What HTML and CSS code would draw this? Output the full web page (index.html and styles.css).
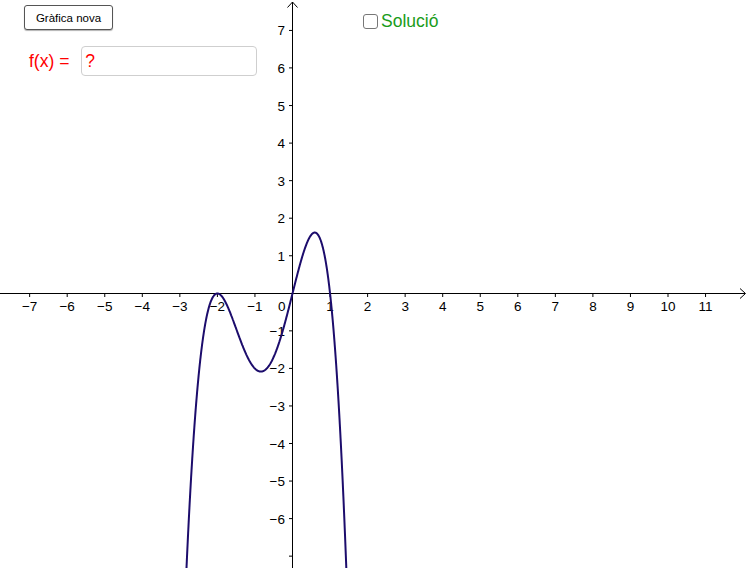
FILE: index.html
```html
<!DOCTYPE html>
<html>
<head>
<meta charset="utf-8">
<link rel="stylesheet" href="styles.css">
</head>
<body>
<div class="app">
  <svg class="graph" width="747" height="568" viewBox="0 0 747 568" xmlns="http://www.w3.org/2000/svg">
    <g class="axes">
      <line x1="0" y1="293.5" x2="745" y2="293.5"/>
      <polyline points="740,288.5 745.5,293.5 740,298.5" fill="none"/>
      <line x1="292.5" y1="2" x2="292.5" y2="568"/>
      <polyline points="287.5,7.5 292.5,2 297.5,7.5" fill="none"/>
      <g class="ticks">
        <line x1="29.65" y1="293.5" x2="29.65" y2="297"/>
        <line x1="67.2" y1="293.5" x2="67.2" y2="297"/>
        <line x1="104.75" y1="293.5" x2="104.75" y2="297"/>
        <line x1="142.3" y1="293.5" x2="142.3" y2="297"/>
        <line x1="179.85" y1="293.5" x2="179.85" y2="297"/>
        <line x1="217.4" y1="293.5" x2="217.4" y2="297"/>
        <line x1="254.95" y1="293.5" x2="254.95" y2="297"/>
        <line x1="330.05" y1="293.5" x2="330.05" y2="297"/>
        <line x1="367.6" y1="293.5" x2="367.6" y2="297"/>
        <line x1="405.15" y1="293.5" x2="405.15" y2="297"/>
        <line x1="442.7" y1="293.5" x2="442.7" y2="297"/>
        <line x1="480.25" y1="293.5" x2="480.25" y2="297"/>
        <line x1="517.8" y1="293.5" x2="517.8" y2="297"/>
        <line x1="555.35" y1="293.5" x2="555.35" y2="297"/>
        <line x1="592.9" y1="293.5" x2="592.9" y2="297"/>
        <line x1="630.45" y1="293.5" x2="630.45" y2="297"/>
        <line x1="668" y1="293.5" x2="668" y2="297"/>
        <line x1="705.55" y1="293.5" x2="705.55" y2="297"/>
        <line x1="289" y1="30.45" x2="292.5" y2="30.45"/>
        <line x1="289" y1="67.9" x2="292.5" y2="67.9"/>
        <line x1="289" y1="105.55" x2="292.5" y2="105.55"/>
        <line x1="289" y1="143.1" x2="292.5" y2="143.1"/>
        <line x1="289" y1="180.65" x2="292.5" y2="180.65"/>
        <line x1="289" y1="218.2" x2="292.5" y2="218.2"/>
        <line x1="289" y1="255.75" x2="292.5" y2="255.75"/>
        <line x1="289" y1="330.85" x2="292.5" y2="330.85"/>
        <line x1="289" y1="368.4" x2="292.5" y2="368.4"/>
        <line x1="289" y1="405.95" x2="292.5" y2="405.95"/>
        <line x1="289" y1="443.5" x2="292.5" y2="443.5"/>
        <line x1="289" y1="481.05" x2="292.5" y2="481.05"/>
        <line x1="289" y1="518.6" x2="292.5" y2="518.6"/>
        <line x1="289" y1="556.15" x2="292.5" y2="556.15"/>
      </g>
    </g>
    <g class="xlabels">
      <text x="29.65" y="311.3">−7</text>
      <text x="67.2" y="311.3">−6</text>
      <text x="104.75" y="311.3">−5</text>
      <text x="142.3" y="311.3">−4</text>
      <text x="179.85" y="311.3">−3</text>
      <text x="217.4" y="311.3">−2</text>
      <text x="254.95" y="311.3">−1</text>
      <text x="330.05" y="311.3">1</text>
      <text x="367.6" y="311.3">2</text>
      <text x="405.15" y="311.3">3</text>
      <text x="442.7" y="311.3">4</text>
      <text x="480.25" y="311.3">5</text>
      <text x="517.8" y="311.3">6</text>
      <text x="555.35" y="311.3">7</text>
      <text x="592.9" y="311.3">8</text>
      <text x="630.45" y="311.3">9</text>
      <text x="668" y="311.3">10</text>
      <text x="705.55" y="311.3">11</text>
    </g>
    <g class="ylabels">
      <text x="285.5" y="311.3">0</text>
      <text x="285" y="35.4">7</text>
      <text x="285" y="72.9">6</text>
      <text x="285" y="110.5">5</text>
      <text x="285" y="148.1">4</text>
      <text x="285" y="185.6">3</text>
      <text x="285" y="223.2">2</text>
      <text x="285" y="260.7">1</text>
      <text x="285" y="335.8">−1</text>
      <text x="285" y="373.4">−2</text>
      <text x="285" y="410.9">−3</text>
      <text x="285" y="448.5">−4</text>
      <text x="285" y="486">−5</text>
      <text x="285" y="523.6">−6</text>
    </g>
    <path id="curve" class="curve" d=""/>
  </svg>

  <button class="btn-new">Gràfica nova</button>

  <div class="fx-row">
    <span class="fx-label">f(x) =</span>
    <div class="fx-input">?</div>
  </div>

  <label class="solution">
    <span class="check"></span>
    <span class="solution-text">Solució</span>
  </label>
</div>
<script src="script.js"></script>
</body>
</html>
```

FILE: styles.css
```css
html, body {
  margin: 0;
  padding: 0;
  background: #ffffff;
}

.app {
  position: relative;
  width: 747px;
  height: 568px;
  overflow: hidden;
  font-family: "Liberation Sans", Arial, sans-serif;
}

.graph {
  position: absolute;
  left: 0;
  top: 0;
  display: block;
}

.axes line,
.axes polyline {
  stroke: #000000;
  stroke-width: 1;
}

.xlabels text,
.ylabels text {
  font-family: "Liberation Sans", Arial, sans-serif;
  font-size: 13.5px;
  fill: #000000;
}

.xlabels text {
  text-anchor: middle;
}

.ylabels text {
  text-anchor: end;
}

.curve {
  fill: none;
  stroke: #1c0c6c;
  stroke-width: 2;
  stroke-linejoin: round;
}

.btn-new {
  position: absolute;
  left: 24px;
  top: 5px;
  width: 89px;
  height: 25px;
  margin: 0;
  padding: 0;
  background: #ffffff;
  border: 1.5px solid #555555;
  border-radius: 3px;
  box-shadow: 0 1px 1px rgba(0, 0, 0, 0.3);
  font-family: "Liberation Sans", Arial, sans-serif;
  font-size: 11.5px;
  color: #000000;
}

.fx-row {
  position: absolute;
  left: 29px;
  top: 46px;
  display: flex;
  align-items: center;
  gap: 12px;
}

.fx-label {
  font-size: 17.5px;
  color: #ff0000;
  line-height: 30px;
}

.fx-input {
  box-sizing: border-box;
  width: 176px;
  height: 30px;
  border: 1px solid #cfcfcf;
  border-radius: 4px;
  padding-left: 3px;
  font-size: 17.5px;
  line-height: 28px;
  color: #ff0000;
}

.solution {
  position: absolute;
  left: 363px;
  top: 9px;
  display: flex;
  align-items: center;
  gap: 3px;
}

.check {
  box-sizing: border-box;
  width: 15px;
  height: 15px;
  border: 1.5px solid #777777;
  border-radius: 3px;
  background: #ffffff;
}

.solution-text {
  font-size: 17.5px;
  line-height: 24px;
  color: #1a9c1a;
}
```

FILE: script.js
```js
(function () {
  var ox = 292.5, oy = 293.5, u = 37.55;
  function f(x) { return -x * (x - 1) * (x + 2) * (x + 2); }
  var pts = [];
  for (var x = -2.95; x <= 1.6; x += 0.005) {
    var y = f(x);
    var px = ox + x * u;
    var py = oy - y * u;
    if (py > 620) continue;
    pts.push(px.toFixed(2) + "," + py.toFixed(2));
  }
  document.getElementById("curve").setAttribute("d", "M" + pts.join(" L"));
})();
```
